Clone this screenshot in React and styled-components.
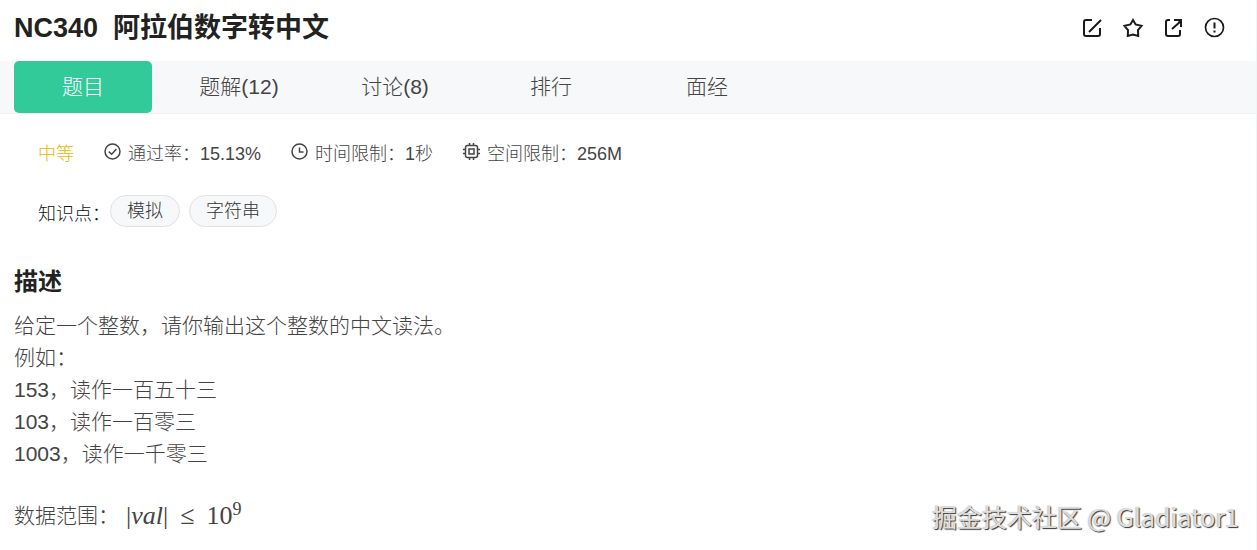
import React from "react";
import styled, { createGlobalStyle } from "styled-components";

const GlobalStyle = createGlobalStyle`
  * { box-sizing: border-box; }
  body {
    margin: 0;
    background: #fff;
    color: #444;
    font-family: "Liberation Sans", "Noto Sans CJK SC", sans-serif;
    font-weight: 300;
  }
`;

const Page = styled.main`
  position: relative;
  min-height: 100vh;
  border-right: 1px solid #f0f5f6;
`;

const Header = styled.header`
  display: flex;
  align-items: center;
  justify-content: space-between;
  height: 61px;
  padding: 0 30px 6px 14px;
`;

const Title = styled.h1`
  display: flex;
  gap: 15px;
  margin: 0;
  font-size: 27px;
  line-height: 40px;
  font-weight: 700;
  color: #222;
`;

const Actions = styled.div`
  display: flex;
  gap: 19px;
`;

const IconButton = styled.button`
  display: flex;
  padding: 0;
  border: 0;
  background: none;
  color: #1a1a1a;
  cursor: pointer;
`;

const Icon = styled.svg`
  display: block;
  width: ${(p) => p.$size}px;
  height: ${(p) => p.$size}px;
  fill: none;
  stroke: currentColor;
  stroke-width: ${(p) => (p.$size > 20 ? 2 : 1.5)};
`;

const Tabs = styled.nav`
  display: flex;
  gap: 18px;
  height: 53px;
  padding: 0 14px;
  background: #f6f8f9;
  border-bottom: 1px solid #eff1f2;
`;

const Tab = styled.button`
  width: 138px;
  height: 52px;
  padding: 0;
  border: 0;
  border-radius: 5px;
  background: ${(p) => (p.$active ? "#32ca99" : "transparent")};
  color: ${(p) => (p.$active ? "#fff" : "#444")};
  font: inherit;
  font-size: 21px;
  line-height: 32px;
  cursor: pointer;
`;

const Meta = styled.div`
  display: flex;
  gap: 30px;
  padding: 26px 38px 0;
  font-size: 18px;
  line-height: 28px;
`;

const Level = styled.span`
  color: #ecb800;
`;

const MetaItem = styled.span`
  display: flex;
  gap: 6px;

  svg { margin-top: 3px; }
`;

const Knowledge = styled.div`
  display: flex;
  align-items: center;
  padding: 25px 38px 0;
  font-size: 18px;
  line-height: 30px;
`;

const KnowledgeLabel = styled.span`
  padding-top: 6px;
  color: #111;
`;

const TagList = styled.div`
  display: flex;
  gap: 9px;
`;

const Tag = styled.a`
  height: 32px;
  padding: 0 16px;
  border: 1px solid #e0e3e6;
  border-radius: 16px;
  background: #f6f8f9;
  color: #333;
  text-decoration: none;
`;

const Description = styled.section`
  padding: 35px 14px 0;
  font-size: 21px;
  line-height: 32px;
`;

const Heading = styled.h2`
  margin: 0 0 10px;
  font-size: 24px;
  line-height: 36px;
  font-weight: 700;
  color: #222;
`;

const Text = styled.p`
  margin: 0;
`;

const Range = styled.p`
  display: flex;
  gap: 7px;
  margin: 30px 0 0;
`;

const Formula = styled.span`
  display: flex;
  gap: 12px;
  font-family: "Liberation Serif", serif;
  font-size: 26px;
  font-weight: 400;

  sup {
    font-size: 18px;
    line-height: 0;
    vertical-align: 9px;
  }
`;

const Watermark = styled.div`
  position: absolute;
  right: 17px;
  bottom: 16px;
  font-family: "Noto Sans CJK SC", sans-serif;
  font-size: 25px;
  line-height: 36px;
  font-weight: 400;
  color: #dedede;
  text-shadow: 1px 1px 1px #333, -1px 0 1px #ccc;
`;

const EditIcon = () => (
  <Icon $size={22} viewBox="0 0 22 22" aria-hidden="true">
    <path d="M11 3H5Q3 3 3 5V17Q3 19 5 19H17Q19 19 19 17V11M8 15L20 3" />
  </Icon>
);

const StarIcon = () => (
  <Icon $size={22} viewBox="0 0 22 22" aria-hidden="true">
    <path d="M11 3L13.6 7.4L19.5 8.8L16 13L16.2 19L11 17.6L5.8 19L6 13L2.5 8.8L8.4 7.4Z" />
  </Icon>
);

const ShareIcon = () => (
  <Icon $size={22} viewBox="0 0 22 22" aria-hidden="true">
    <path d="M7 3H5Q3 3 3 5V17Q3 19 5 19H15Q17 19 17 17V13M9 12L18 4" />
    <path d="M11 2H19V10H17V6L15 4H11Z" fill="currentColor" stroke="none" />
  </Icon>
);

const NoticeIcon = () => (
  <Icon $size={22} viewBox="0 0 22 22" aria-hidden="true">
    <circle cx="10.5" cy="10.5" r="9" strokeWidth="1.7" />
    <path d="M10.5 5.5V11.5M10.5 13.5V15.5" />
  </Icon>
);

const PassIcon = () => (
  <Icon $size={18} viewBox="0 0 18 18" aria-hidden="true">
    <circle cx="8.5" cy="8.5" r="7.5" />
    <path d="M4.8 8.6L7.7 11.3L12.4 6" />
  </Icon>
);

const ClockIcon = () => (
  <Icon $size={18} viewBox="0 0 18 18" aria-hidden="true">
    <circle cx="8.5" cy="8.5" r="7.5" />
    <path d="M8.5 4.5V9H12.5" />
  </Icon>
);

const ChipIcon = () => (
  <Icon $size={18} viewBox="0 0 18 18" aria-hidden="true">
    <rect x="2.5" y="2.5" width="12" height="12" rx="2" />
    <rect x="6" y="6" width="5" height="5" />
    <path d="M6.5 0V2M10.5 0V2M6.5 15V17M10.5 15V17M0 6.5H2M0 10.5H2M15 6.5H17M15 10.5H17" />
  </Icon>
);

const actions = [
  ["编辑", EditIcon],
  ["收藏", StarIcon],
  ["分享", ShareIcon],
  ["反馈", NoticeIcon],
];

const tabs = ["题目", "题解(12)", "讨论(8)", "排行", "面经"];

const limits = [
  [PassIcon, "通过率：15.13%"],
  [ClockIcon, "时间限制：1秒"],
  [ChipIcon, "空间限制：256M"],
];

const lines = [
  "给定一个整数，请你输出这个整数的中文读法。",
  "例如：",
  "153，读作一百五十三",
  "103，读作一百零三",
  "1003，读作一千零三",
];

export default function App() {
  return (
    <Page>
      <GlobalStyle />
      <Header>
        <Title>
          <span>NC340</span>
          <span>阿拉伯数字转中文</span>
        </Title>
        <Actions>
          {actions.map(([label, Glyph]) => (
            <IconButton key={label} type="button" aria-label={label}>
              <Glyph />
            </IconButton>
          ))}
        </Actions>
      </Header>
      <Tabs>
        {tabs.map((tab, i) => (
          <Tab key={tab} type="button" $active={i === 0}>
            {tab}
          </Tab>
        ))}
      </Tabs>
      <Meta>
        <Level>中等</Level>
        {limits.map(([Glyph, text]) => (
          <MetaItem key={text}>
            <Glyph />
            {text}
          </MetaItem>
        ))}
      </Meta>
      <Knowledge>
        <KnowledgeLabel>知识点：</KnowledgeLabel>
        <TagList>
          <Tag href="#simulation">模拟</Tag>
          <Tag href="#string">字符串</Tag>
        </TagList>
      </Knowledge>
      <Description>
        <Heading>描述</Heading>
        {lines.map((line) => (
          <Text key={line}>{line}</Text>
        ))}
        <Range>
          数据范围：
          <Formula>
            <span>|<i>val</i>|</span>
            <span>≤</span>
            <span>10<sup>9</sup></span>
          </Formula>
        </Range>
      </Description>
      <Watermark>掘金技术社区 @ Gladiator1</Watermark>
    </Page>
  );
}
